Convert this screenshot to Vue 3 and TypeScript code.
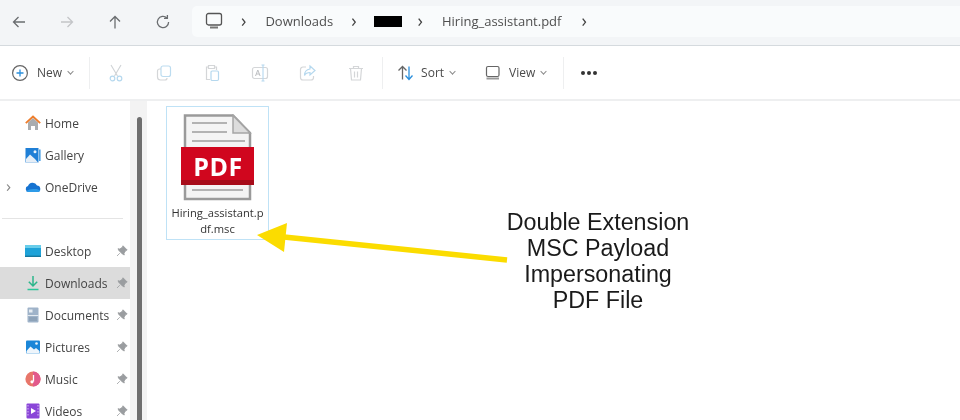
<script setup lang="ts">
interface NavItem { label: string; icon: string; pin?: boolean; active?: boolean; chevron?: boolean }
const top: NavItem[] = [
  { label: 'Home', icon: 'home' },
  { label: 'Gallery', icon: 'gallery' },
  { label: 'OneDrive', icon: 'cloud', chevron: true },
]
const pinned: NavItem[] = [
  { label: 'Desktop', icon: 'desktop', pin: true },
  { label: 'Downloads', icon: 'download', pin: true, active: true },
  { label: 'Documents', icon: 'docs', pin: true },
  { label: 'Pictures', icon: 'pictures', pin: true },
  { label: 'Music', icon: 'music', pin: true },
  { label: 'Videos', icon: 'videos', pin: true },
]
const groups = [top, pinned]
const annotation = ['Double Extension', 'MSC Payload', 'Impersonating', 'PDF File']
</script>

<template>
  <div class="window">
    <header class="topbar">
      <nav class="navbtns">
        <svg class="nb" viewBox="0 0 16 16"><path d="M14 8H2.500M7.500 3 2.500 8l5 5" stroke="#6a6d70" /></svg>
        <svg class="nb" viewBox="0 0 16 16"><path d="M2 8h11.500M8.500 3l5 5-5 5" stroke="#c3c5c8" /></svg>
        <svg class="nb" viewBox="0 0 16 16"><path d="M8 14.500V2.500M3 7.500l5-5 5 5" stroke="#6a6d70" /></svg>
        <svg class="nb" viewBox="0 0 16 16"><path d="M13.600 8a5.600 5.600 0 1 1-1.700-4M12.400 1v3.400H9" stroke="#6a6d70" /></svg>
      </nav>
      <div class="address">
        <svg class="pc" viewBox="0 0 18 18"><rect x="1.500" y="1.500" width="15" height="11.500" rx="2" fill="none" stroke="#555" stroke-width="1.300" /><path d="M5 15.500h8" stroke="#777" stroke-width="2" /></svg>
        <span class="chev c1">›</span>
        <span class="crumb">Downloads</span>
        <span class="chev c2">›</span>
        <span class="redact"></span>
        <span class="chev c3">›</span>
        <span class="crumb">Hiring_assistant.pdf</span>
        <span class="chev c4">›</span>
      </div>
    </header>

    <div class="toolbar">
      <div class="tool new">
        <svg class="ti" viewBox="0 0 18 18"><circle cx="9" cy="9" r="7.400" fill="none" stroke="#666" stroke-width="1.200" /><path d="M9 5.500v7M5.500 9h7" stroke="#2a8fdc" stroke-width="1.300" /></svg>
        <span>New</span><i class="caret"></i>
      </div>
      <span class="sep s1"></span>
      <div class="ghosts">
        <svg class="ti" viewBox="0 0 18 18"><path d="M4 1l6.500 11M14 1 7.500 12" stroke="#cfd3d6" fill="none" stroke-width="1.100" /><circle cx="5.500" cy="14.500" r="2.300" fill="none" stroke="#b5d8ee" stroke-width="1.200" /><circle cx="12.500" cy="14.500" r="2.300" fill="none" stroke="#b5d8ee" stroke-width="1.200" /></svg>
        <svg class="ti" viewBox="0 0 18 18"><rect x="6" y="2" width="9.500" height="10.500" rx="2" fill="none" stroke="#bcdcf0" stroke-width="1.200" /><path d="M6 5H4.500a2 2 0 0 0-2 2v6a3 3 0 0 0 3 3H10a2 2 0 0 0 2-2" fill="none" stroke="#d4d6d8" stroke-width="1.200" /></svg>
        <svg class="ti" viewBox="0 0 18 18"><path d="M5 3H3.500v12.500H7M12 3h1.500v3M5.500 1.500h6v3h-6z" fill="none" stroke="#d4d6d8" stroke-width="1.200" /><rect x="8" y="7" width="7.500" height="9.500" rx="1.200" fill="none" stroke="#b5d8ee" stroke-width="1.200" /></svg>
        <svg class="ti" viewBox="0 0 18 18"><rect x="1.500" y="3.500" width="15" height="11" rx="2" fill="none" stroke="#d4d6d8" stroke-width="1.200" /><path d="M4.500 12l2.300-6 2.300 6M5.400 10h2.800" fill="none" stroke="#bdbfc2" stroke-width="1" /><path d="M12 1v16M10.500 1h3M10.500 17h3" stroke="#b5d8ee" stroke-width="1.100" /></svg>
        <svg class="ti" viewBox="0 0 18 18"><path d="M7 3H4a2.500 2.500 0 0 0-2.500 2.500v8A2.500 2.500 0 0 0 4 16h8a2.500 2.500 0 0 0 2.500-2.500V12" fill="none" stroke="#d4d6d8" stroke-width="1.200" /><path d="M11 2l5 4.500-5 4.500V8.500c-3 0-4.500 1-5.500 3 0-4 2-6 5.500-6.500z" fill="none" stroke="#b5d8ee" stroke-width="1.200" /></svg>
        <svg class="ti" viewBox="0 0 18 18"><path d="M2 4.500h14M6.500 4.500V2.500h5v2M3.500 4.500l1 11.500h9l1-11.500M7.500 7.500v6M10.500 7.500v6" fill="none" stroke="#d4d6d8" stroke-width="1.200" /></svg>
      </div>
      <span class="sep s2"></span>
      <div class="tool sort">
        <svg class="ti" viewBox="0 0 18 18"><path d="M5.500 15.500V2.500M1.500 6.500l4-4 4 4" fill="none" stroke="#666" stroke-width="1.300" /><path d="M12 2.500v13M8.500 11.500l3.500 4 3.500-4" fill="none" stroke="#2a8fdc" stroke-width="1.300" /></svg>
        <span>Sort</span><i class="caret"></i>
      </div>
      <div class="tool view">
        <svg class="ti" viewBox="0 0 18 18"><rect x="2.500" y="2.500" width="12.500" height="10" rx="1.500" fill="none" stroke="#666" stroke-width="1.200" /><path d="M2.500 14.500h12.500" stroke="#999" stroke-width="2" /></svg>
        <span>View</span><i class="caret"></i>
      </div>
      <span class="sep s3"></span>
      <div class="more"><i></i><i></i><i></i></div>
    </div>

    <div class="body">
      <aside class="sidebar">
        <template v-for="(group, g) in groups" :key="g">
          <div v-if="g > 0" class="divider"></div>
          <div v-for="item in group" :key="item.label" class="row" :class="{ active: item.active }">
            <span v-if="item.chevron" class="rowchev">›</span>
            <svg class="ni" viewBox="0 0 16 16">
              <template v-if="item.icon === 'home'">
                <path d="M3 7.500 8 3l5 4.500V15h-3v-4H6v4H3z" fill="#a9acaf" />
                <path d="M.8 8.200 8 1.500l7.200 6.700" fill="none" stroke="#ee7d2b" stroke-width="1.800" />
              </template>
              <template v-else-if="item.icon === 'gallery'">
                <rect x="0.500" y="1" width="13" height="14.500" fill="#1f7fd6" />
                <rect x="14" y="2.500" width="1.600" height="11.500" fill="#4aa0e4" />
                <path d="M1 15.500V12l4-4.500 5 4.500 3 3.500z" fill="#e6eef6" />
                <circle cx="10" cy="4.800" r="1.500" fill="#e9f2fa" />
              </template>
              <template v-else-if="item.icon === 'cloud'">
                <path d="M3.500 13a3 3 0 0 1-.5-5.900A4.800 4.800 0 0 1 12 6.500a3.300 3.300 0 0 1 .8 6.500z" fill="#1673d1" />
                <path d="M1 12.200c.7.600 1.500.8 2.500.8h9.300a3.300 3.300 0 0 0 2.500-1.200c-2-1.800-4-2-6-1.800-3-.2-6 .4-7.800 2.200z" fill="#2e9be8" />
              </template>
              <template v-else-if="item.icon === 'desktop'">
                <rect x="0" y="2" width="16" height="12" rx="1" fill="#1ea2d8" />
                <rect x="0" y="2" width="16" height="3" fill="#69cdea" />
                <rect x="0" y="12.600" width="16" height="1.400" fill="#16789f" />
              </template>
              <template v-else-if="item.icon === 'download'">
                <path d="M8 1v9.500M3.800 6.800 8 11l4.200-4.200" fill="none" stroke="#2cb58a" stroke-width="1.500" />
                <path d="M2.500 14.500h11" stroke="#2cc79a" stroke-width="1.500" />
              </template>
              <template v-else-if="item.icon === 'docs'">
                <rect x="2.500" y="0.500" width="11" height="15" rx="1" fill="#9fb3c9" />
                <rect x="4" y="2.500" width="3.500" height="3" fill="#e7edf3" />
                <path d="M2.500 8.500h11" stroke="#e4eaf0" stroke-width="1" />
                <path d="M4 11h8M4 13h8" stroke="#7d92a8" stroke-width="1" />
              </template>
              <template v-else-if="item.icon === 'pictures'">
                <rect x="1" y="1.500" width="14" height="13" rx="1" fill="#1b86d8" />
                <path d="M1.500 14.500v-2.500l4-4.500 3.500 3 2-1.500 3.500 3v2.500z" fill="#eef5fb" />
                <circle cx="11.500" cy="4.500" r="1.300" fill="#eef5fb" />
              </template>
              <template v-else-if="item.icon === 'music'">
                <circle cx="8" cy="8" r="7.600" fill="#e8766a" />
                <path d="M8 .4a7.600 7.600 0 0 1 0 15.200z" fill="#e25a8c" />
                <path d="M8.500 4v6.500" stroke="#fff" stroke-width="1.300" />
                <circle cx="7" cy="10.800" r="1.600" fill="#fff" />
              </template>
              <template v-else>
                <rect x="1.500" y="0.500" width="13" height="15" rx="1" fill="#8a46d8" />
                <path d="M6 5l5 3-5 3z" fill="#fff" />
                <path d="M3 2v12M13 2v12" stroke="#c9a5ef" stroke-width="1.200" stroke-dasharray="1.500 1.500" />
              </template>
            </svg>
            <span class="label">{{ item.label }}</span>
            <svg v-if="item.pin" class="pin" viewBox="0 0 12 12"><path d="M7 .8 11.200 5 9.800 5.600 8 8.200 8.300 10 6.600 9.200 2.800 5.400 2 3.700 3.800 4 6.400 2.200zM3.800 8.200 1 11" fill="#9a9da0" stroke="#9a9da0" stroke-width=".8" /></svg>
          </div>
        </template>
      </aside>

      <div class="rail"><div class="thumb"></div></div>

      <main class="content">
        <div class="file">
          <svg class="pdf" viewBox="0 0 74 88">
            <path d="M4 1.500h48L69 19v66H4z" fill="#f4f4f4" stroke="#9a9a9a" stroke-width="2.500" />
            <path d="M52 1.500V19h17z" fill="#dcdcdc" stroke="#a5a5a5" stroke-width="1.500" />
            <path d="M11 9h35M11 18h35M11 27h53M11 76h51" stroke="#b3b3b3" stroke-width="2" />
            <rect x="0" y="33" width="73" height="38" fill="#d0061e" />
            <rect x="0" y="66" width="73" height="5" fill="#a70c1a" />
            <text x="37" y="62" class="pdftext" text-anchor="middle">PDF</text>
          </svg>
          <div class="fname">Hiring_assistant.p<br />df.msc</div>
        </div>
      </main>
    </div>

    <svg class="arrow" viewBox="0 0 960 420">
      <path d="M507 260 284 237" stroke="#fbdc00" stroke-width="5.500" fill="none" />
      <path d="M257 235 287 223 284 252z" fill="#fbdc00" />
    </svg>

    <div class="note">
      <div v-for="line in annotation" :key="line">{{ line }}</div>
    </div>
  </div>
</template>

<style>
html, body { margin: 0; background: #fff; }
</style>

<style scoped>
.window { position: relative; width: 960px; height: 420px; overflow: hidden; background: #fff; font-family: "Open Sans", "Noto Sans", sans-serif; color: #3c3c3c; filter: blur(0.35px); }
.topbar { height: 46px; box-sizing: border-box; background: #f3f5f7; border-bottom: 1px solid #d5dade; display: flex; align-items: center; }
.navbtns { width: 192px; display: flex; gap: 32px; padding-left: 11px; box-sizing: border-box; margin-top: -2px; flex: none; }
.nb { width: 16px; height: 16px; fill: none; stroke-width: 1.300; flex: none; }
.address { flex: 1; height: 31px; margin-top: -3px; background: #f9fbfc; border-radius: 5px 0 0 5px; display: flex; align-items: center; font-size: 13px; color: #4f4f4f; }
.pc { width: 18px; height: 18px; margin-left: 13px; }
.chev { font-size: 18px; line-height: 1; color: #444; margin-top: -3px; }
.c1 { margin-left: 18px; }
.crumb { white-space: nowrap; }
.c1 + .crumb { margin-left: 19px; }
.c2 { margin-left: 18px; }
.redact { width: 28px; height: 11px; background: #000; margin-left: 17px; }
.c3 { margin-left: 16px; }
.c3 + .crumb { margin-left: 19px; }
.c4 { margin-left: 20px; }
.toolbar { height: 55px; box-sizing: border-box; border-bottom: 2px solid #eeeff0; display: flex; align-items: center; font-size: 12px; color: #4a4a4a; background: #fff; }
.tool { display: flex; align-items: center; }
.ti { width: 18px; height: 18px; flex: none; }
.new { margin-left: 11px; }
.new span { margin-left: 8px; }
.caret { width: 4px; height: 4px; border-right: 1px solid #888; border-bottom: 1px solid #888; transform: rotate(45deg) scale(.9); margin: -2px 0 0 6px; }
.sep { width: 1px; height: 32px; background: #eeeff0; flex: none; }
.s1 { margin-left: 16px; }
.ghosts { display: flex; gap: 30px; margin-left: 17px; }
.s2 { margin-left: 17px; }
.sort { margin-left: 14px; }
.sort span { margin-left: 6px; }
.view { margin-left: 29px; }
.view span { margin-left: 7px; }
.s3 { margin-left: 17px; }
.more { display: flex; gap: 2px; margin-left: 17px; }
.more i { width: 4px; height: 4px; border-radius: 50%; background: #333; }
.body { display: flex; height: 319px; }
.sidebar { width: 130px; flex: none; box-sizing: border-box; padding-top: 6px; font-size: 12px; color: #444; }
.row { position: relative; height: 32px; display: flex; align-items: center; padding-left: 25px; }
.row.active { background: #dcdcdc; }
.rowchev { position: absolute; left: 6px; top: 6px; font-size: 17px; color: #888; line-height: 1; }
.ni { width: 16px; height: 16px; flex: none; }
.label { margin-left: 4px; }
.pin { width: 12px; height: 12px; position: absolute; left: 116px; top: 10px; }
.divider { height: 32px; position: relative; }
.divider::after { content: ""; position: absolute; left: 2px; right: 7px; top: 15px; height: 1px; background: #e4e4e4; }
.rail { width: 17px; flex: none; background: #f3f3f3; position: relative; }
.thumb { position: absolute; left: 7px; width: 5px; top: 16px; bottom: 0; background: #6f6f6f; border-radius: 3px 3px 0 0; }
.content { flex: 1; padding: 5px 0 0 19px; background: #fff; }
.file { width: 103px; height: 134px; box-sizing: border-box; border: 1px solid #bfe2f6; display: flex; flex-direction: column; align-items: center; }
.pdf { width: 74px; height: 88px; margin-top: 7px; flex: none; }
.pdftext { font-family: "Open Sans", sans-serif; font-weight: 700; font-size: 25px; fill: #fff; letter-spacing: .5px; }
.fname { margin-top: 3px; width: 101px; text-align: center; font-size: 11.200px; line-height: 16px; color: #333; white-space: nowrap; }
.arrow { position: absolute; left: 0; top: 0; width: 960px; height: 420px; pointer-events: none; }
.note { position: absolute; left: 488px; top: 209px; width: 220px; text-align: center; font-family: "Liberation Sans", Arial, sans-serif; font-size: 23.300px; line-height: 26px; color: #1a1a1a; }
</style>
